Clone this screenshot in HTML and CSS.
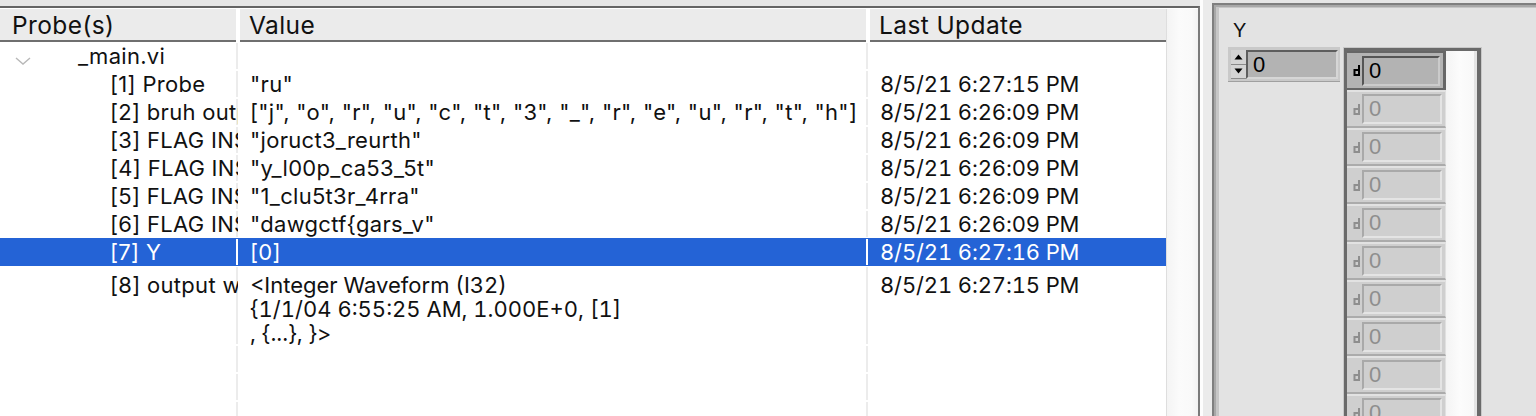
FILE: index.html
```html
<!DOCTYPE html>
<html>
<head>
<meta charset="utf-8">
<link rel="stylesheet" href="styles.css">
</head>
<body>
<div class="screen">
  <div class="probes">
    <div class="table">
      <div class="thead">
        <div class="th c1">Probe(s)</div>
        <div class="th c2">Value</div>
        <div class="th c3">Last Update</div>
      </div>
      <div class="tbody">
        <div class="row">
          <div class="td c1"><svg class="chev" width="16" height="8" viewBox="0 0 16 8"><path d="M1 1l7 6 7-6" fill="none" stroke="#b8b8b8" stroke-width="1.4"/></svg><span class="lvl0">_main.vi</span></div>
          <div class="td c2"></div>
          <div class="td c3"></div>
        </div>
        <div class="row">
          <div class="td c1"><span class="lvl1">[1] Probe</span></div>
          <div class="td c2">"ru"</div>
          <div class="td c3">8/5/21 6:27:15 PM</div>
        </div>
        <div class="row">
          <div class="td c1"><span class="lvl1">[2] bruh output</span></div>
          <div class="td c2">["j", "o", "r", "u", "c", "t", "3", "_", "r", "e", "u", "r", "t", "h"]</div>
          <div class="td c3">8/5/21 6:26:09 PM</div>
        </div>
        <div class="row">
          <div class="td c1"><span class="lvl1">[3] FLAG INSIDE 1</span></div>
          <div class="td c2">"joruct3_reurth"</div>
          <div class="td c3">8/5/21 6:26:09 PM</div>
        </div>
        <div class="row">
          <div class="td c1"><span class="lvl1">[4] FLAG INSIDE 2</span></div>
          <div class="td c2">"y_l00p_ca53_5t"</div>
          <div class="td c3">8/5/21 6:26:09 PM</div>
        </div>
        <div class="row">
          <div class="td c1"><span class="lvl1">[5] FLAG INSIDE 3</span></div>
          <div class="td c2">"1_clu5t3r_4rra"</div>
          <div class="td c3">8/5/21 6:26:09 PM</div>
        </div>
        <div class="row">
          <div class="td c1"><span class="lvl1">[6] FLAG INSIDE 4</span></div>
          <div class="td c2">"dawgctf{gars_v"</div>
          <div class="td c3">8/5/21 6:26:09 PM</div>
        </div>
        <div class="row selected">
          <div class="td c1"><span class="lvl1">[7] Y</span></div>
          <div class="td c2">[0]</div>
          <div class="td c3">8/5/21 6:27:16 PM</div>
        </div>
        <div class="row multi">
          <div class="td c1"><span class="lvl1">[8] output waveform</span></div>
          <div class="td c2">&lt;Integer Waveform (I32)<br>{1/1/04 6:55:25 AM, 1.000E+0, [1]<br>, {...}, }&gt;</div>
          <div class="td c3">8/5/21 6:27:15 PM</div>
        </div>
        <div class="row"><div class="td c1"></div><div class="td c2"></div><div class="td c3"></div></div>
        <div class="row"><div class="td c1"></div><div class="td c2"></div><div class="td c3"></div></div>
        <div class="row"><div class="td c1"></div><div class="td c2"></div><div class="td c3"></div></div>
      </div>
    </div>
    <div class="vscroll"></div>
  </div>
  <div class="strip"></div>
  <div class="panel">
    <div class="label">Y</div>
    <div class="controls">
      <div class="numeric">
        <div class="spin">
          <div class="btn"><svg width="9" height="6" viewBox="0 0 9 6"><path d="M4.5 0.5L8.5 5.5H0.5z" fill="#000"/></svg></div>
          <div class="btn"><svg width="9" height="6" viewBox="0 0 9 6"><path d="M0.5 0.5H8.5L4.5 5.5z" fill="#000"/></svg></div>
        </div>
        <div class="display">0</div>
      </div>
      <div class="array">
        <div class="elements">
          <div class="el active"><svg class="idx" width="9" height="11" viewBox="0 0 9 11"><path d="M7 0v11M7 5H2.5v5H7" fill="none" stroke="currentColor" stroke-width="2"/></svg><div class="field">0</div></div>
          <div class="el"><svg class="idx" width="9" height="11" viewBox="0 0 9 11"><path d="M7 0v11M7 5H2.5v5H7" fill="none" stroke="currentColor" stroke-width="2"/></svg><div class="field">0</div></div>
          <div class="el"><svg class="idx" width="9" height="11" viewBox="0 0 9 11"><path d="M7 0v11M7 5H2.5v5H7" fill="none" stroke="currentColor" stroke-width="2"/></svg><div class="field">0</div></div>
          <div class="el"><svg class="idx" width="9" height="11" viewBox="0 0 9 11"><path d="M7 0v11M7 5H2.5v5H7" fill="none" stroke="currentColor" stroke-width="2"/></svg><div class="field">0</div></div>
          <div class="el"><svg class="idx" width="9" height="11" viewBox="0 0 9 11"><path d="M7 0v11M7 5H2.5v5H7" fill="none" stroke="currentColor" stroke-width="2"/></svg><div class="field">0</div></div>
          <div class="el"><svg class="idx" width="9" height="11" viewBox="0 0 9 11"><path d="M7 0v11M7 5H2.5v5H7" fill="none" stroke="currentColor" stroke-width="2"/></svg><div class="field">0</div></div>
          <div class="el"><svg class="idx" width="9" height="11" viewBox="0 0 9 11"><path d="M7 0v11M7 5H2.5v5H7" fill="none" stroke="currentColor" stroke-width="2"/></svg><div class="field">0</div></div>
          <div class="el"><svg class="idx" width="9" height="11" viewBox="0 0 9 11"><path d="M7 0v11M7 5H2.5v5H7" fill="none" stroke="currentColor" stroke-width="2"/></svg><div class="field">0</div></div>
          <div class="el"><svg class="idx" width="9" height="11" viewBox="0 0 9 11"><path d="M7 0v11M7 5H2.5v5H7" fill="none" stroke="currentColor" stroke-width="2"/></svg><div class="field">0</div></div>
          <div class="el"><svg class="idx" width="9" height="11" viewBox="0 0 9 11"><path d="M7 0v11M7 5H2.5v5H7" fill="none" stroke="currentColor" stroke-width="2"/></svg><div class="field">0</div></div>
        </div>
        <div class="array-rest"></div>
      </div>
    </div>
  </div>
</div>
</body>
</html>
```
FILE: styles.css
```css
html, body {
  margin: 0;
  padding: 0;
}
body {
  width: 1536px;
  height: 416px;
  overflow: hidden;
  background: #e6e6e6;
  font-family: Inter, "Liberation Sans", sans-serif;
  color: #111;
}
.screen {
  display: flex;
  height: 416px;
  overflow: hidden;
}
.probes {
  box-sizing: border-box;
  width: 1200px;
  flex: none;
  margin-top: 6px;
  border-top: 2px solid #646464;
  border-right: 2px solid #7a7a7a;
  padding-top: 1px;
  background: #fff;
  display: flex;
  overflow: hidden;
}
.table {
  width: 1166px;
  flex: none;
}
.vscroll {
  flex: none;
  width: 31px;
  border-left: 1px solid #dedede;
  background: linear-gradient(to right, #f4f4f4, #fbfbfb 40%, #f9f9f9 80%, #f2f2f2);
}
.thead {
  display: flex;
  height: 33px;
}
.th {
  box-sizing: border-box;
  height: 33px;
  background: #ebebeb;
  border-bottom: 2px solid #6f6f6f;
  font-size: 24.5px;
  letter-spacing: 0.4px;
  line-height: 27px;
  padding-top: 3px;
  color: #111;
  white-space: nowrap;
  overflow: hidden;
}
.th.c1 { width: 236px; padding-left: 12px; margin-right: 4px; }
.th.c2 { width: 626px; padding-left: 9px; margin-right: 4px; }
.th.c3 { width: 296px; padding-left: 9px; }

.row {
  display: flex;
  height: 28px;
  font-size: 22px;
  letter-spacing: 0.3px;
  line-height: 29px;
}
.td {
  box-sizing: border-box;
  white-space: nowrap;
  overflow: hidden;
  height: 100%;
}
.td.c1, .td.c2 {
  background-image: linear-gradient(#ececec, #ececec);
  background-size: 2px calc(100% - 2px);
  background-position: right center;
  background-repeat: no-repeat;
}
.td.c1 { width: 238px; display: flex; align-items: flex-start; }
.td.c2 { width: 630px; padding-left: 12px; }
.td.c3 { width: 298px; padding-left: 12px; font-feature-settings: "tnum"; letter-spacing: -0.15px; }

.chev {
  flex: none;
  margin: 15px 0 0 15px;
}
.lvl0 { margin-left: 47px; }
.lvl1 { margin-left: 110px; }

.row.selected {
  background: #2463d6;
  color: #fff;
}
.row.selected .td.c1, .row.selected .td.c2 {
  background-image: linear-gradient(#fff, #fff);
}
.row.multi {
  height: 79px;
  line-height: 24px;
}
.row.multi .td {
  padding-top: 7px;
}
.row.multi .td.c2 {
  font-feature-settings: "tnum";
  letter-spacing: 0;
}

.strip {
  flex: none;
  width: 9px;
  border-left: 3px solid #fdfdfd;
  background: #ebebeb;
}
.panel {
  flex: 1;
  margin-top: 3px;
  border-top: 2px solid #7f7f7f;
  border-left: 2px solid #7f7f7f;
  box-shadow: inset 2px 2px 0 #a8a8a8, inset 5px 3px 0 #c6c6c6;
  background: #e3e3e3;
  padding: 13px 0 0 14px;
  font-family: "Liberation Sans", Arial, sans-serif;
  overflow: hidden;
}
.label {
  font-size: 20px;
  line-height: 24px;
  margin-left: 5px;
  color: #111;
}
.controls {
  display: flex;
  align-items: flex-start;
  margin-top: 5px;
}
.numeric {
  box-sizing: border-box;
  width: 112px;
  height: 35px;
  flex: none;
  display: flex;
  padding: 3px 2px 2px 3px;
  background: #c9c9c9;
  border-bottom: 1px solid #a0a0a0;
}
.spin {
  width: 15px;
  display: flex;
  flex-direction: column;
}
.btn {
  flex: 1;
  display: flex;
  align-items: center;
  justify-content: center;
  background: #d4d4d4;
  border-bottom: 1px solid #8a8a8a;
}
.display {
  flex: 1;
  border-top: 2px solid #5e5e5e;
  border-left: 2px solid #5e5e5e;
  border-bottom: 2px solid #d6d6d6;
  border-right: 2px solid #d6d6d6;
  background: #b3b3b3;
  font-size: 22px;
  line-height: 25px;
  padding-left: 5px;
  color: #000;
}
.array {
  flex: none;
  margin-left: 4px;
  margin-top: 1px;
  display: flex;
  height: 420px;
  border-style: solid;
  border-color: #6a6a6a;
  border-width: 3px 4px 0 3px;
  box-shadow: 0 0 0 1px #c8c8c8;
  background: #fafafa;
}
.elements {
  width: 99px;
  display: flex;
  flex-direction: column;
}
.array-rest {
  width: 28px;
  border-right: 3px solid #e4e4e4;
  background: linear-gradient(to right, #f4f4f4, #fcfcfc 50%, #f8f8f8);
}
.el {
  box-sizing: border-box;
  height: 38px;
  flex: none;
  display: flex;
  align-items: center;
  background: #cfcfcf;
  border-top: 2px solid #e2e2e2;
  border-bottom: 2px solid #ababab;
  border-right: 1px solid #e0e0e0;
  padding: 0 3px 0 5px;
  color: #8e8e8e;
}
.el.active {
  height: 39px;
  background: #b3b3b3;
  border-top: 2px solid #666;
  border-bottom: 2px solid #666;
  border-right: 3px solid #666;
  color: #000;
}
.idx {
  flex: none;
  margin-right: 1px;
}
.field {
  box-sizing: border-box;
  width: 80px;
  height: 30px;
  border-top: 2px solid #a9a9a9;
  border-left: 2px solid #a9a9a9;
  border-bottom: 2px solid #e4e4e4;
  border-right: 2px solid #e4e4e4;
  font-size: 22px;
  line-height: 26px;
  padding-left: 5px;
}
.el.active .field {
  border-top-color: #555;
  border-left-color: #555;
  border-bottom-color: #cbcbcb;
  border-right-color: #cbcbcb;
}
```
